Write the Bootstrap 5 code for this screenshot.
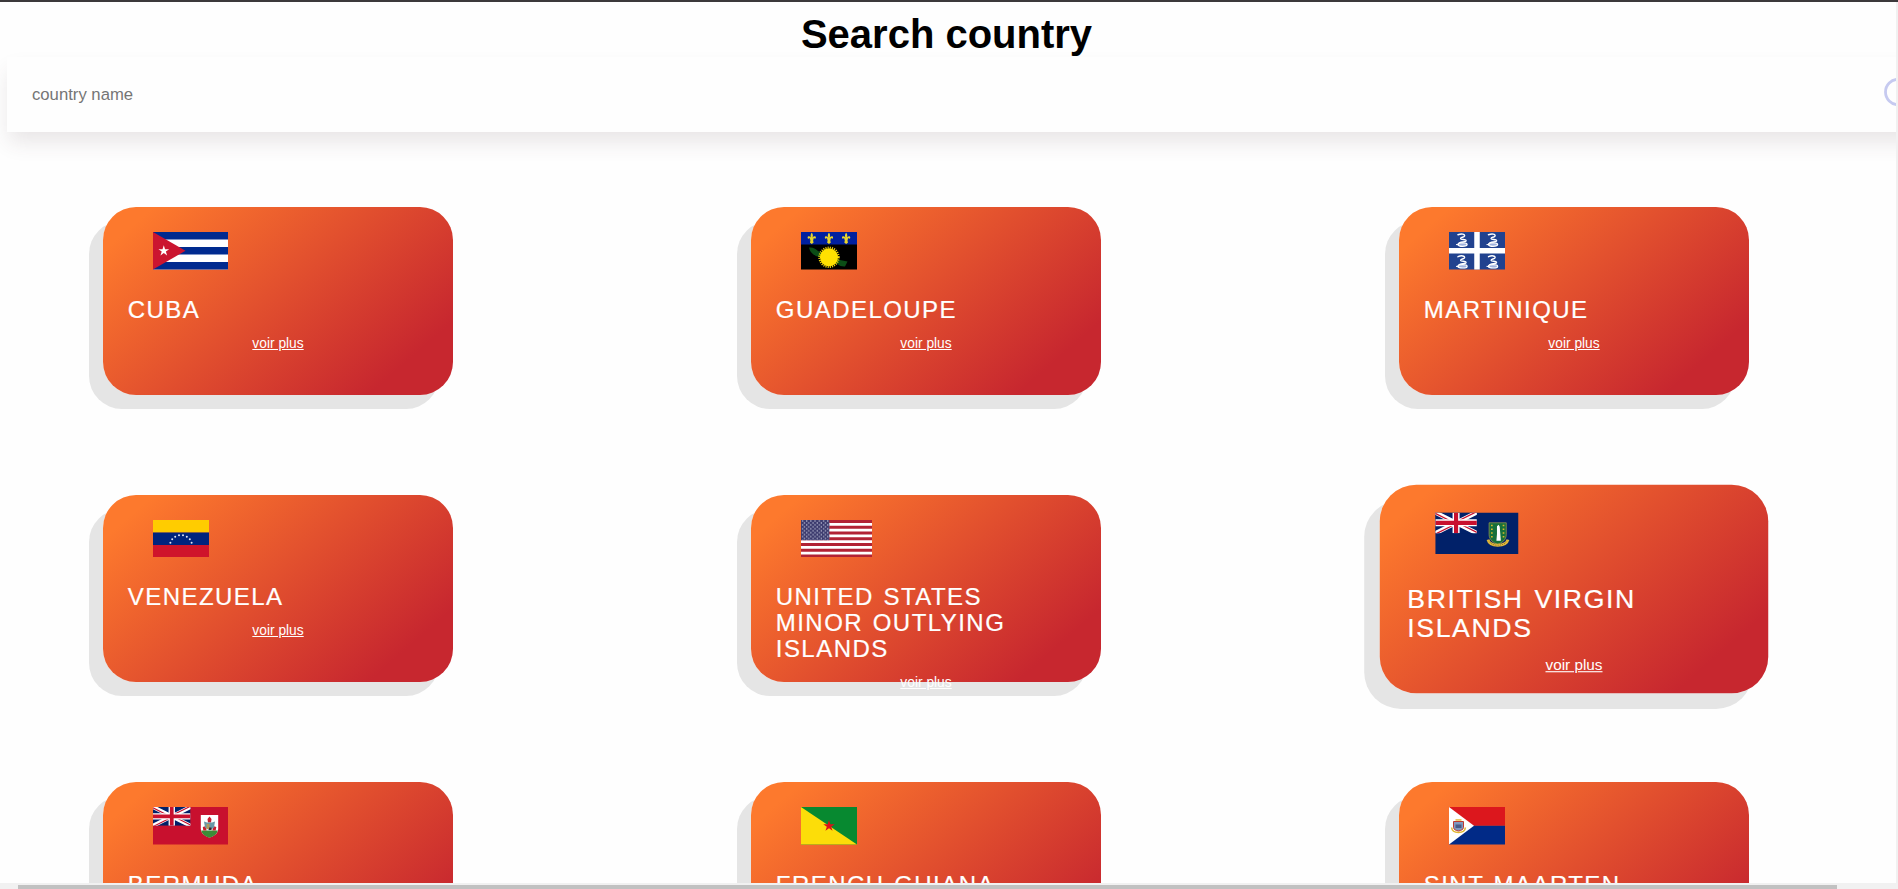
<!DOCTYPE html>
<html lang="fr">
<head>
<meta charset="utf-8">
<meta name="viewport" content="width=device-width, initial-scale=1">
<title>Search country</title>
<link rel="stylesheet" href="https://cdn.jsdelivr.net/npm/bootstrap@5.3.0/dist/css/bootstrap.min.css">
<style>
  body { font-family: "Liberation Sans", Arial, sans-serif; background: #fefefe; }
  .top-line { height: 2px; background: #3c393b; }
  .page-title { font-size: 40px; line-height: 46px; padding-top: 9px; width: 1893px; color: #000; }
  .search-box { width: 1980px; height: 75px; margin-left: 7px; padding: 0 46px 0 25px; background: #fefefe;
    box-shadow: 0 12px 20px -2px rgba(70, 50, 60, .12); }
  .search-input { font-size: 16.7px; color: #757575; padding: 0; border: 0; background: transparent; width: 1845px; outline: 0; }
  .search-input::placeholder { color: #757575; opacity: 1; }
  .search-icon { margin-left: 7px; margin-top: -2px; }
  .country-grid { grid-template-columns: repeat(3, 350px); grid-auto-rows: 187.5px; gap: 100px 298px; padding: 75px 0 0 103px; }
  .country-tile { border-radius: 33px; padding-top: 25px; color: #fff;
    background: linear-gradient(139deg, #fd792d 9%, #c7272f 85%);
    box-shadow: -14px 14px 0 #e5e5e5; }
  .country-tile.is-hover { transform: scale(1.11); }
  .flag { height: 37.5px; margin-left: 50px; }
  .country-name { font-size: 24px; line-height: 26px; letter-spacing: 1.45px; word-spacing: 1.6px; font-weight: 400; -webkit-text-stroke: .2px #fff; width: 270px; margin: 27px 0 10px 24.8px; }
  .more-link { font-size: 13.8px; line-height: 22px; }
  .v-track { width: 2px; background: #f1f1f1; }
  .h-track { height: 6px; background: #f1f1f1; padding: 2px 0 0 18px; }
  .h-thumb { width: 1819px; background: #c1c1c1; }
</style>
</head>
<body class="vh-100 overflow-hidden d-flex flex-column">
<svg width="0" height="0" class="position-absolute" aria-hidden="true">
  <defs>
    <clipPath id="ujClip"><path d="M0 0h38v19H0z"/></clipPath>
    <symbol id="unionJack" viewBox="0 0 38 19">
      <g clip-path="url(#ujClip)">
        <path fill="#012169" d="M0 0h38v19H0z"/>
        <path stroke="#fff" stroke-width="4" d="M0 0l38 19M38 0L0 19"/>
        <path stroke="#c8102e" stroke-width="1.2" d="M0 .8l19 9.5M38 18.2l-19-9.5M38-.8L19 8.7M0 19.8l19-9.5"/>
        <path stroke="#fff" stroke-width="6.4" d="M19 0v19M0 9.5h38"/>
        <path stroke="#c8102e" stroke-width="3.8" d="M19 0v19M0 9.5h38"/>
      </g>
    </symbol>
    <symbol id="fleur" viewBox="0 0 10 12">
      <path fill="#e9d62b" d="M5 0C6.6 2 6.4 4 5.6 6 6 3.4 9.5 3 9.4 5.4 9.3 6.6 8 6.7 7.8 6 7 6 6.6 6.7 6.4 7.2H7v1H6.2L7 10.6 5 12 3 10.6 3.8 8.2H3v-1h.6C3.4 6.7 3 6 2.2 6 2 6.7.7 6.6.6 5.4.5 3 4 3.4 4.4 6 3.600 4 3.400 2 5 0z"/>
    </symbol>
    <symbol id="snake" viewBox="0 0 14 14">
      <path fill="none" stroke="#fff" stroke-width="1.5" stroke-linecap="round" d="M2.500 1.800C6 .4 9.500 1 9 3 8.400 4.600 4.800 4 5.200 5.700 5.600 7 11 6 10.500 8 10 9.500 4 8.300 3.600 10.300"/>
      <ellipse cx="7" cy="11.600" rx="4.600" ry="1.700" fill="#9fb1dd" stroke="#fff" stroke-width="1.300"/>
      <path stroke="#fff" stroke-width="1" d="M.5 11.600h3"/>
    </symbol>
    <pattern id="usStars" width="4.200" height="3.900" patternUnits="userSpaceOnUse">
      <path fill="#3c3b6e" d="M0 0h4.200v3.900H0z"/>
      <circle cx="1.500" cy="1" r=".72" fill="#c5c8dd"/><circle cx="3.600" cy="2.950" r=".72" fill="#c5c8dd"/>
    </pattern>
  </defs>
</svg>

<div class="top-line flex-shrink-0"></div>
<div class="d-flex flex-grow-1 overflow-hidden">
  <main class="flex-grow-1 overflow-hidden">
    <h1 class="page-title fw-bold text-center mb-0">Search country</h1>
    <div class="search-box d-flex align-items-center">
      <input class="search-input flex-shrink-0" type="text" placeholder="country name" aria-label="country name">
      <svg class="search-icon flex-shrink-0" width="40" height="40" viewBox="0 0 40 40" fill="none" stroke="#c6caf0" stroke-width="2.800"><circle cx="14.200" cy="18" r="12.700"/><path d="M23 27l10 10"/></svg>
    </div>

    <section class="country-grid d-grid">
      <article class="country-tile d-flex flex-column">
        <svg class="flag flex-shrink-0" width="75" viewBox="0 0 75 37.5">
          <path fill="#fff" d="M0 0h75v37.500H0z"/><path fill="#002a8f" d="M0 0h75v7.500H0zM0 15h75v7.500H0zM0 30h75v7.500H0z"/>
          <path fill="#cb1530" d="M0 0l32.500 18.750L0 37.500z"/>
          <path fill="#fff" d="M10.800 13.300l1.270 3.900h4.100l-3.300 2.400 1.260 3.900-3.330-2.400-3.330 2.400 1.260-3.900-3.300-2.400h4.100z"/>
        </svg>
        <h2 class="country-name">CUBA</h2>
        <a class="more-link text-white text-center" href="#">voir plus</a>
      </article>

      <article class="country-tile d-flex flex-column">
        <svg class="flag flex-shrink-0" width="56" viewBox="0 0 56 37.5">
          <path d="M0 0h56v37.500H0z"/><path fill="#00209f" d="M0 0h56v12.500H0z"/>
          <use href="#fleur" x="6" y=".6" width="9.500" height="11.300"/><use href="#fleur" x="23.200" y=".6" width="9.500" height="11.300"/><use href="#fleur" x="40.400" y=".6" width="9.500" height="11.300"/>
          <path fill="#0b4d16" d="M8 15.500c4-.5 6 1 9 3.500l22 9 7.500 1.500-2.500 5c-6 .5-8-4-13-5L18 25c-4-1-9-4-10-9.500z"/>
          <circle cx="28" cy="25.300" r="9.700" fill="none" stroke="#f5d90a" stroke-width="2" stroke-dasharray="1.100 1.100"/>
          <circle cx="28" cy="25.300" r="9" fill="#ffe100"/>
        </svg>
        <h2 class="country-name">GUADELOUPE</h2>
        <a class="more-link text-white text-center" href="#">voir plus</a>
      </article>

      <article class="country-tile d-flex flex-column">
        <svg class="flag flex-shrink-0" width="56" viewBox="0 0 56 37.5">
          <path fill="#21428f" d="M0 0h56v37.500H0z"/><path stroke="#fff" stroke-width="5.500" d="M28 0v37.500M0 18.750h56"/>
          <use href="#snake" x="6.500" y="1" width="14" height="14"/><use href="#snake" x="37" y="1" width="14" height="14"/>
          <use href="#snake" x="6.500" y="22.800" width="14" height="14"/><use href="#snake" x="37" y="22.800" width="14" height="14"/>
        </svg>
        <h2 class="country-name">MARTINIQUE</h2>
        <a class="more-link text-white text-center" href="#">voir plus</a>
      </article>

      <article class="country-tile d-flex flex-column">
        <svg class="flag flex-shrink-0" width="56" viewBox="0 0 56 37.5">
          <path fill="#fc0" d="M0 0h56v12.500H0z"/><path fill="#00247d" d="M0 12.500h56V25H0z"/><path fill="#cf142b" d="M0 25h56v12.500H0z"/>
          <g fill="#dfe4f2"><circle cx="17.400" cy="22.700" r="1"/><circle cx="19.200" cy="19.300" r="1"/><circle cx="22.200" cy="16.800" r="1"/><circle cx="26" cy="15.300" r="1"/><circle cx="30" cy="15.300" r="1"/><circle cx="33.800" cy="16.800" r="1"/><circle cx="36.800" cy="19.300" r="1"/><circle cx="38.600" cy="22.700" r="1"/></g>
        </svg>
        <h2 class="country-name">VENEZUELA</h2>
        <a class="more-link text-white text-center" href="#">voir plus</a>
      </article>

      <article class="country-tile d-flex flex-column">
        <svg class="flag flex-shrink-0" width="71" viewBox="0 0 71 37.5">
          <path fill="#fff" d="M0 0h71v37.500H0z"/>
          <path stroke="#b22234" stroke-width="2.880" d="M0 1.440h71M0 7.210h71M0 12.980h71M0 18.750h71M0 24.520h71M0 30.290h71M0 36.060h71"/>
          <path fill="url(#usStars)" d="M0 0h28.400v20.200H0z"/>
        </svg>
        <h2 class="country-name">UNITED STATES MINOR OUTLYING ISLANDS</h2>
        <a class="more-link text-white text-center" href="#">voir plus</a>
      </article>

      <article class="country-tile is-hover d-flex flex-column">
        <svg class="flag flex-shrink-0" width="75" viewBox="0 0 75 37.5">
          <path fill="#012169" d="M0 0h75v37.500H0z"/><use href="#unionJack" width="37.500" height="18.750"/>
          <path fill="#17703a" stroke="#a79f4f" stroke-width=".6" d="M48.500 9.300h15.500v10.500c0 5-4 7.500-7.750 9-3.750-1.500-7.750-4-7.750-9z"/>
          <path fill="none" stroke="#d8b62d" stroke-width="1.500" stroke-dasharray="1.400 2" d="M51 11v12M61.500 11v12"/>
          <path fill="#fff" d="M55.600 12.500l1.500-1.500 1 2 .4 5 .6 7.500h-4l.5-6z"/>
          <path fill="none" stroke="#dfb63a" stroke-width="2.600" d="M47.500 24.500c1 4 5 5 8.800 5s8.200-1 9.200-5"/>
          <path fill="none" stroke="#6b5a20" stroke-width=".6" stroke-dasharray="1 1" d="M49 26.500c2 2.500 4.500 3 7.300 3s5.700-.5 7.700-3"/>
        </svg>
        <h2 class="country-name">BRITISH VIRGIN ISLANDS</h2>
        <a class="more-link text-white text-center" href="#">voir plus</a>
      </article>

      <article class="country-tile d-flex flex-column">
        <svg class="flag flex-shrink-0" width="75" viewBox="0 0 75 37.5">
          <path fill="#c8102e" d="M0 0h75v37.500H0z"/><use href="#unionJack" width="37.500" height="18.750"/>
          <path fill="#fff" d="M47.800 8h17.400v13.500c0 5-4 7.500-8.700 9-4.700-1.500-8.700-4-8.700-9z"/>
          <path fill="#3d8b37" d="M48.200 23.500h16.600c-1 4-4.600 6-8.300 7.200-3.700-1.200-7.300-3.200-8.300-7.200z"/>
          <path fill="#c8202e" d="M56.500 9.500l2 2.500-.5 3.500h-3l-.5-3.500zM49.800 20l3.200-1 .5 4.500h-3.200zM60 19l3.300 1-.6 3.500h-3.200z"/>
          <path fill="#6a98a6" d="M51 14.500l3 1h5l3-1-1 6-4.500 3-4.500-3z"/><path fill="#b09a5c" d="M53.500 17h3v5h-3z"/><path fill="#3b2530" d="M56 20.500h2.500v2.500H56z"/>
        </svg>
        <h2 class="country-name">BERMUDA</h2>
        <a class="more-link text-white text-center" href="#">voir plus</a>
      </article>

      <article class="country-tile d-flex flex-column">
        <svg class="flag flex-shrink-0" width="56" viewBox="0 0 56 37.5">
          <path fill="#078930" d="M0 0h56v37.500H0z"/><path fill="#fcdd09" d="M0 0l56 37.500H0z"/>
          <path fill="#da121a" d="M28 13l1.350 4.150h4.360l-3.530 2.560 1.350 4.150L28 21.300l-3.530 2.560 1.350-4.150-3.530-2.560h4.360z"/>
        </svg>
        <h2 class="country-name">FRENCH GUIANA</h2>
        <a class="more-link text-white text-center" href="#">voir plus</a>
      </article>

      <article class="country-tile d-flex flex-column">
        <svg class="flag flex-shrink-0" width="56" viewBox="0 0 56 37.5">
          <path fill="#dc171d" d="M0 0h56v18.750H0z"/><path fill="#012a87" d="M0 18.750h56V37.500H0z"/><path fill="#fff" d="M0 0l25 18.750L0 37.500z"/>
          <path fill="none" stroke="#e3b62f" stroke-width="1.500" d="M2.600 20.500c.4 4 3.500 5 6.900 5s6.500-1 6.900-5"/>
          <path fill="#7f97c0" stroke="#c0392f" d="M4.500 14.500h10v6c0 2-2.500 3-5 3.500-2.500-.5-5-1.500-5-3.500z"/>
          <path fill="#4b5b86" d="M6.500 17.500h6V21h-6z"/><path fill="#e8b93c" d="M6.500 12.200h6v1.500h-6z"/>
        </svg>
        <h2 class="country-name">SINT MAARTEN</h2>
        <a class="more-link text-white text-center" href="#">voir plus</a>
      </article>
    </section>
  </main>
  <div class="v-track flex-shrink-0"></div>
</div>
<div class="h-track flex-shrink-0 d-flex"><div class="h-thumb"></div></div>
<script src="https://cdn.jsdelivr.net/npm/bootstrap@5.3.0/dist/js/bootstrap.bundle.min.js"></script>
</body>
</html>
